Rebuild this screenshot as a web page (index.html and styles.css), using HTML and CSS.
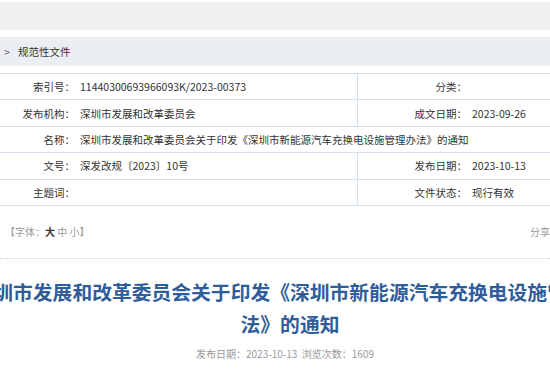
FILE: index.html
```html
<!DOCTYPE html>
<html lang="zh-CN">
<head>
  <meta charset="UTF-8">
  <meta name="viewport" content="width=device-width, initial-scale=1.0">
  <title>深圳市发展和改革委员会关于印发《深圳市新能源汽车充换电设施管理办法》的通知</title>
  <link rel="stylesheet" href="styles.css">
</head>
<body>
  <div class="topbar"></div>

  <div class="crumb">
    <span class="crumb-arrow">&gt;</span>
    <span class="crumb-text">规范性文件</span>
  </div>

  <div class="page">
    <table class="info">
      <colgroup>
        <col class="col-label">
        <col class="col-value">
        <col class="col-label2">
        <col class="col-value2">
      </colgroup>
      <tr>
        <td class="label">索引号：</td>
        <td class="value split">11440300693966093K/2023-00373</td>
        <td class="label">分类：</td>
        <td class="value"></td>
      </tr>
      <tr>
        <td class="label">发布机构：</td>
        <td class="value split">深圳市发展和改革委员会</td>
        <td class="label">成文日期：</td>
        <td class="value">2023-09-26</td>
      </tr>
      <tr>
        <td class="label">名称：</td>
        <td class="value" colspan="3">深圳市发展和改革委员会关于印发《深圳市新能源汽车充换电设施管理办法》的通知</td>
      </tr>
      <tr>
        <td class="label">文号：</td>
        <td class="value split">深发改规〔2023〕10号</td>
        <td class="label">发布日期：</td>
        <td class="value">2023-10-13</td>
      </tr>
      <tr>
        <td class="label">主题词：</td>
        <td class="value split"></td>
        <td class="label">文件状态：</td>
        <td class="value">现行有效</td>
      </tr>
    </table>

    <div class="tools">
      <div class="fontsize">【字体：<b>大</b> <span>中</span> <span>小</span>】</div>
      <div class="share">分享到：</div>
    </div>
  </div>

  <div class="article">
    <h1 class="title">深圳市发展和改革委员会关于印发《深圳市新能源汽车充换电设施管理办法》的通知</h1>
    <p class="meta">发布日期：2023-10-13&nbsp;&nbsp;浏览次数：1609</p>
  </div>
</body>
</html>
```

FILE: styles.css
```css
html, body {
  margin: 0;
  padding: 0;
}

body {
  width: 550px;
  overflow: hidden;
  background: #fff;
  color: #333;
  font-family: "Microsoft YaHei", "Noto Sans CJK SC", sans-serif;
  font-size: 10.5px;
}

.topbar {
  margin-top: 2px;
  height: 28px;
  background-color: #f0f0f0;
}

.crumb {
  margin-top: 7px;
  height: 29px;
  background-color: #ebeff3;
  display: flex;
  align-items: center;
  padding-left: 4px;
}

.crumb-arrow {
  width: 14px;
  color: #555;
}

.page {
  width: 600px;
  margin-top: 7px;
}

.info {
  width: 680px;
  table-layout: fixed;
  border-collapse: separate;
  border-spacing: 0;
  border-top: 1px solid #d3dfea;
}

.col-label { width: 76px; }
.col-value { width: 282px; }
.col-label2 { width: 110px; }
.col-value2 { width: 212px; }

.info td {
  height: 25.4px;
  padding: 0;
  border-bottom: 1px solid #d3dfea;
  white-space: nowrap;
  vertical-align: middle;
}

.info .label {
  text-align: right;
  padding-right: 1px;
}

.info .value {
  padding-left: 4px;
}

.info .split {
  border-right: 1px solid #d3dfea;
}

.tools {
  height: 52px;
  display: flex;
  align-items: center;
  padding: 0 30px 0 5px;
  border-bottom: 1px dotted #cfcfcf;
  color: #999;
  font-size: 10px;
}

.fontsize b {
  color: #333;
}

.share {
  margin-left: auto;
}

.article {
  width: 640px;
  margin-left: -30px;
  text-align: center;
}

.title {
  margin: 17px 0 0;
  font-size: 19.8px;
  line-height: 32px;
  font-weight: bold;
  color: #2f5d9a;
}

.meta {
  margin: 6px 0 0;
  padding-right: 10px;
  line-height: 16px;
  font-size: 10px;
  color: #999;
}
```
